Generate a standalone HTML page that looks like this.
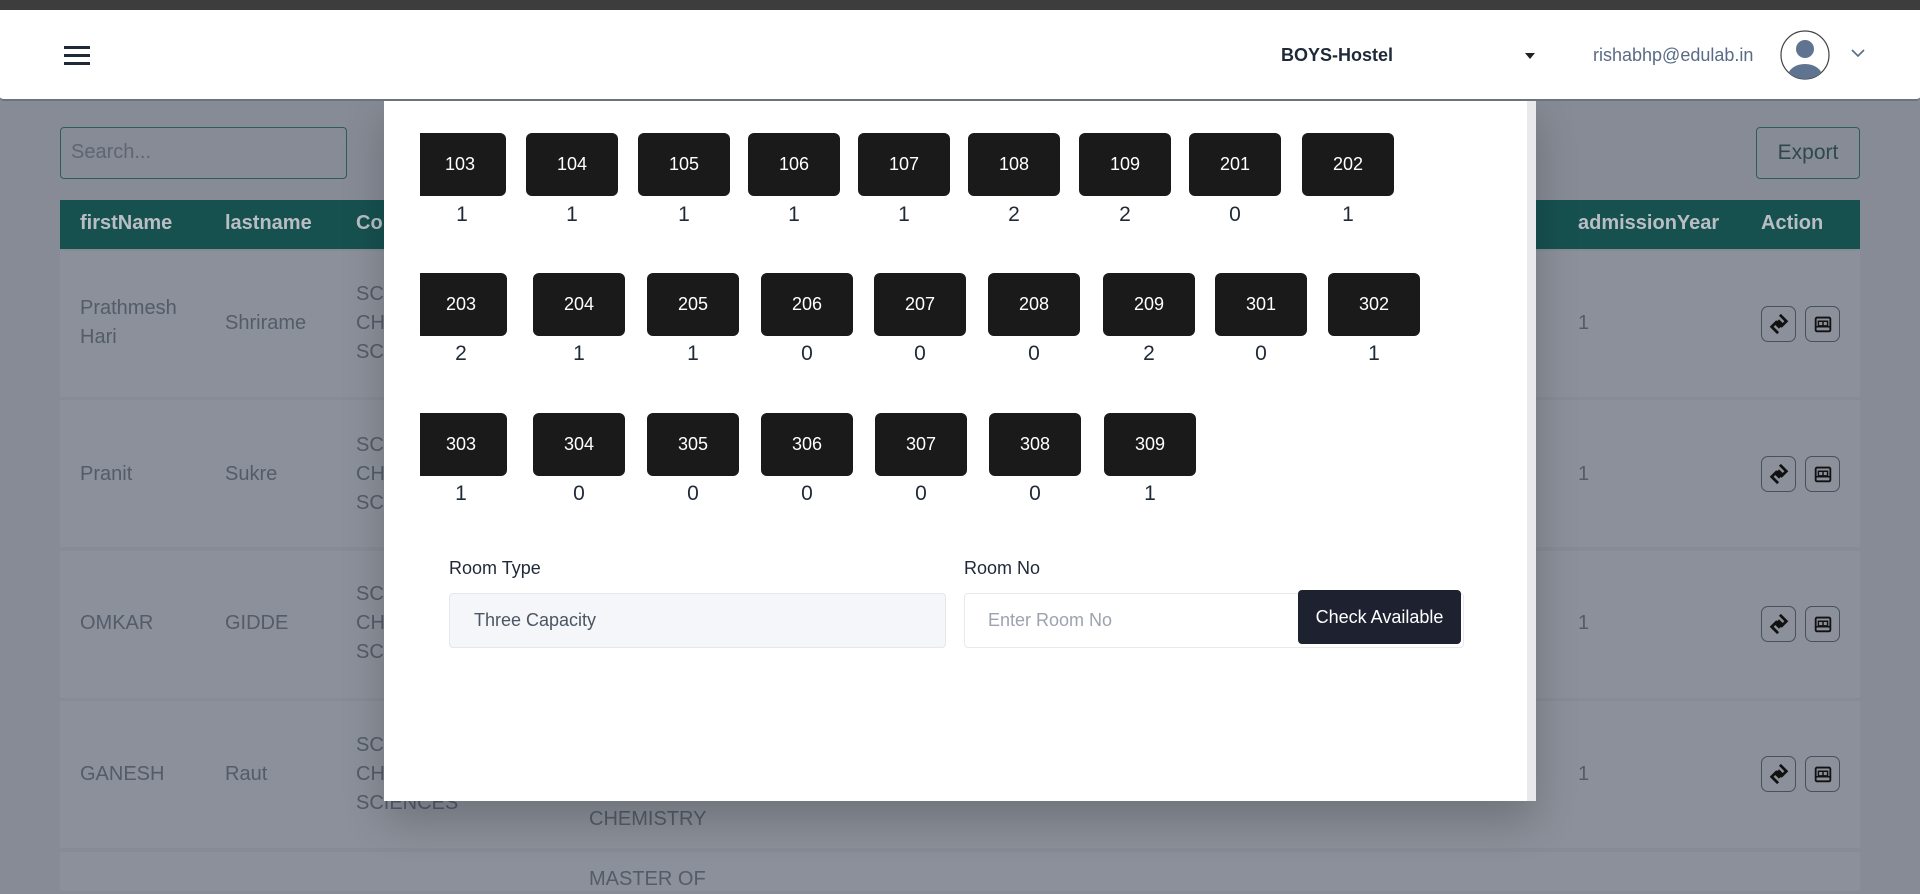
<!DOCTYPE html>
<html><head><meta charset="utf-8"><style>
*{margin:0;padding:0;box-sizing:border-box}
body{width:1920px;height:891px;overflow:hidden;position:relative;background:#868b95;font-family:"Liberation Sans",sans-serif}
.a{position:absolute}
.t{position:absolute;color:#545c69;font-size:20px;line-height:29px;white-space:nowrap}
.row{position:absolute;left:60px;width:1800px;background:#8b909a}
.th{position:absolute;top:212px;color:#b9bec4;font-weight:bold;font-size:20px}
.ib{position:absolute;width:35px;height:36px;border:1.5px solid #4a505a;border-radius:7px;display:flex;align-items:center;justify-content:center}
.rb{position:absolute;width:92px;height:63px;background:#1a1a1a;border-radius:6px;color:#fff;font-size:18px;display:flex;align-items:center;justify-content:center}
.rc{position:absolute;width:92px;text-align:center;color:#1f2937;font-size:21px;margin-top:2px}
</style></head><body>
<div class="a" style="left:60px;top:127px;width:287px;height:52px;border:1.5px solid #2f5c5a;border-radius:4px"></div>
<div class="a" style="left:71px;top:141px;font-size:20px;color:#5f6673">Search...</div>
<div class="a" style="left:1756px;top:127px;width:104px;height:52px;border:1.5px solid #2f5c5a;border-radius:4px;color:#2d4a4a;font-size:21px;text-align:center;line-height:50px">Export</div>
<div class="a" style="left:60px;top:200px;width:1800px;height:49px;background:#165150"></div>
<div class="th" style="left:80px">firstName</div>
<div class="th" style="left:225px">lastname</div>
<div class="th" style="left:356px">Co</div>
<div class="th" style="left:1578px">admissionYear</div>
<div class="th" style="left:1761px">Action</div>
<div class="row" style="top:251px;height:146px"></div>
<div class="row" style="top:400px;height:147px"></div>
<div class="row" style="top:551px;height:147px"></div>
<div class="row" style="top:701px;height:147px"></div>
<div class="row" style="top:852px;height:39px"></div>

<div class="t" style="left:80px;top:294px">Prathmesh<br>Hari</div>
<div class="t" style="left:225px;top:309px">Shrirame</div>
<div class="t" style="left:356px;top:280px">SC<br>CH<br>SC</div>
<div class="t" style="left:80px;top:460px">Pranit</div>
<div class="t" style="left:225px;top:460px">Sukre</div>
<div class="t" style="left:356px;top:431px">SC<br>CH<br>SC</div>
<div class="t" style="left:80px;top:609px">OMKAR</div>
<div class="t" style="left:225px;top:609px">GIDDE</div>
<div class="t" style="left:356px;top:580px">SC<br>CH<br>SC</div>
<div class="t" style="left:80px;top:760px">GANESH</div>
<div class="t" style="left:225px;top:760px">Raut</div>
<div class="t" style="left:356px;top:731px">SC<br>CH<br>SCIENCES</div>
<div class="t" style="left:589px;top:805px">CHEMISTRY</div>
<div class="t" style="left:589px;top:865px">MASTER OF</div>
<div class="t" style="left:1578px;top:309px">1</div>
<div class="t" style="left:1578px;top:460px">1</div>
<div class="t" style="left:1578px;top:609px">1</div>
<div class="t" style="left:1578px;top:760px">1</div>

<svg width="0" height="0" style="position:absolute"><defs>
<g id="s"><path d="M13 2 L20 9 L15 14 L11 10 L9 12 L13 16" fill="none" stroke="#111" stroke-width="3"/><path d="M11 22 L4 15 L9 10 L13 14 L15 12 L11 8" fill="none" stroke="#111" stroke-width="3"/></g>
<g id="b"><rect x="4" y="5" width="16" height="15" rx="1.5" fill="none" stroke="#111" stroke-width="2"/><path d="M7 9h10v5H7z M12 9v5 M4 15h16" fill="none" stroke="#111" stroke-width="1.6"/></g>
</defs></svg>
<div class="ib" style="left:1761px;top:306px"><svg width="22" height="24" viewBox="0 0 24 24"><use href="#s"/></svg></div>
<div class="ib" style="left:1805px;top:306px"><svg width="22" height="24" viewBox="0 0 24 24"><use href="#b"/></svg></div>
<div class="ib" style="left:1761px;top:456px"><svg width="22" height="24" viewBox="0 0 24 24"><use href="#s"/></svg></div>
<div class="ib" style="left:1805px;top:456px"><svg width="22" height="24" viewBox="0 0 24 24"><use href="#b"/></svg></div>
<div class="ib" style="left:1761px;top:606px"><svg width="22" height="24" viewBox="0 0 24 24"><use href="#s"/></svg></div>
<div class="ib" style="left:1805px;top:606px"><svg width="22" height="24" viewBox="0 0 24 24"><use href="#b"/></svg></div>
<div class="ib" style="left:1761px;top:756px"><svg width="22" height="24" viewBox="0 0 24 24"><use href="#s"/></svg></div>
<div class="ib" style="left:1805px;top:756px"><svg width="22" height="24" viewBox="0 0 24 24"><use href="#b"/></svg></div>

<div class="a" style="left:384px;top:95px;width:1152px;height:706px;background:#fff;box-shadow:0 20px 40px rgba(0,0,0,.2)"></div>
<div class="a" style="left:1527px;top:95px;width:9px;height:706px;background:#e9e9ec"></div>
<div class="a" style="left:420px;top:120px;width:1100px;height:400px;overflow:hidden">
<div style="position:relative;left:-420px;top:-120px">
<div class="rb" style="left:414px;top:133px">103</div><div class="rc" style="left:416px;top:201px">1</div>
<div class="rb" style="left:526px;top:133px">104</div><div class="rc" style="left:526px;top:201px">1</div>
<div class="rb" style="left:638px;top:133px">105</div><div class="rc" style="left:638px;top:201px">1</div>
<div class="rb" style="left:748px;top:133px">106</div><div class="rc" style="left:748px;top:201px">1</div>
<div class="rb" style="left:858px;top:133px">107</div><div class="rc" style="left:858px;top:201px">1</div>
<div class="rb" style="left:968px;top:133px">108</div><div class="rc" style="left:968px;top:201px">2</div>
<div class="rb" style="left:1079px;top:133px">109</div><div class="rc" style="left:1079px;top:201px">2</div>
<div class="rb" style="left:1189px;top:133px">201</div><div class="rc" style="left:1189px;top:201px">0</div>
<div class="rb" style="left:1302px;top:133px">202</div><div class="rc" style="left:1302px;top:201px">1</div>

<div class="rb" style="left:415px;top:273px">203</div><div class="rc" style="left:415px;top:340px">2</div>
<div class="rb" style="left:533px;top:273px">204</div><div class="rc" style="left:533px;top:340px">1</div>
<div class="rb" style="left:647px;top:273px">205</div><div class="rc" style="left:647px;top:340px">1</div>
<div class="rb" style="left:761px;top:273px">206</div><div class="rc" style="left:761px;top:340px">0</div>
<div class="rb" style="left:874px;top:273px">207</div><div class="rc" style="left:874px;top:340px">0</div>
<div class="rb" style="left:988px;top:273px">208</div><div class="rc" style="left:988px;top:340px">0</div>
<div class="rb" style="left:1103px;top:273px">209</div><div class="rc" style="left:1103px;top:340px">2</div>
<div class="rb" style="left:1215px;top:273px">301</div><div class="rc" style="left:1215px;top:340px">0</div>
<div class="rb" style="left:1328px;top:273px">302</div><div class="rc" style="left:1328px;top:340px">1</div>

<div class="rb" style="left:415px;top:413px">303</div><div class="rc" style="left:415px;top:480px">1</div>
<div class="rb" style="left:533px;top:413px">304</div><div class="rc" style="left:533px;top:480px">0</div>
<div class="rb" style="left:647px;top:413px">305</div><div class="rc" style="left:647px;top:480px">0</div>
<div class="rb" style="left:761px;top:413px">306</div><div class="rc" style="left:761px;top:480px">0</div>
<div class="rb" style="left:875px;top:413px">307</div><div class="rc" style="left:875px;top:480px">0</div>
<div class="rb" style="left:989px;top:413px">308</div><div class="rc" style="left:989px;top:480px">0</div>
<div class="rb" style="left:1104px;top:413px">309</div><div class="rc" style="left:1104px;top:480px">1</div>
</div></div>

<div class="a" style="left:449px;top:558px;font-size:18px;color:#1f2937">Room Type</div>
<div class="a" style="left:449px;top:593px;width:497px;height:55px;background:#f5f6f9;border:1px solid #e5e7eb;border-radius:4px;padding-left:24px;line-height:53px;font-size:18px;color:#4b5563">Three Capacity</div>
<div class="a" style="left:964px;top:558px;font-size:18px;color:#1f2937">Room No</div>
<div class="a" style="left:964px;top:593px;width:500px;height:55px;background:#fff;border:1px solid #e8e9ec;border-radius:4px;padding-left:23px;line-height:53px;font-size:18px;color:#9ca3af">Enter Room No</div>
<div class="a" style="left:1298px;top:590px;width:163px;height:54px;background:#1e2230;border-radius:4px;color:#fff;font-size:18px;text-align:center;line-height:54px">Check Available</div>

<div class="a" style="left:0;top:0;width:1920px;height:10px;background:#3d3d3d"></div>
<div class="a" style="left:0;top:10px;width:1920px;height:91px;background:#fff;border-bottom:2px solid #6b7280;border-radius:0 0 4px 4px"></div>
<div class="a" style="left:64px;top:46px;width:26px;height:3px;background:#1f2937"></div>
<div class="a" style="left:64px;top:54px;width:26px;height:3px;background:#1f2937"></div>
<div class="a" style="left:64px;top:62px;width:26px;height:3px;background:#1f2937"></div>
<div class="a" style="left:1281px;top:45px;font-size:18px;font-weight:bold;color:#1f2937">BOYS-Hostel</div>
<div class="a" style="left:1525px;top:53px;width:0;height:0;border-left:5px solid transparent;border-right:5px solid transparent;border-top:6px solid #222"></div>
<div class="a" style="left:1593px;top:45px;font-size:18px;color:#5a6b85">rishabhp@edulab.in</div>
<svg class="a" style="left:1780px;top:30px" width="50" height="50" viewBox="0 0 50 50"><defs><clipPath id="c"><circle cx="25" cy="25" r="24"/></clipPath></defs><circle cx="25" cy="25" r="24" fill="#fff" stroke="#444" stroke-width="1.2"/><g clip-path="url(#c)" fill="#5f7490"><circle cx="25" cy="19" r="9"/><ellipse cx="25" cy="46" rx="17" ry="12"/></g></svg>
<svg class="a" style="left:1851px;top:49px" width="14" height="9" viewBox="0 0 14 9"><path d="M1 1l6 6 6-6" fill="none" stroke="#5a6b85" stroke-width="1.6"/></svg>
</body></html>
